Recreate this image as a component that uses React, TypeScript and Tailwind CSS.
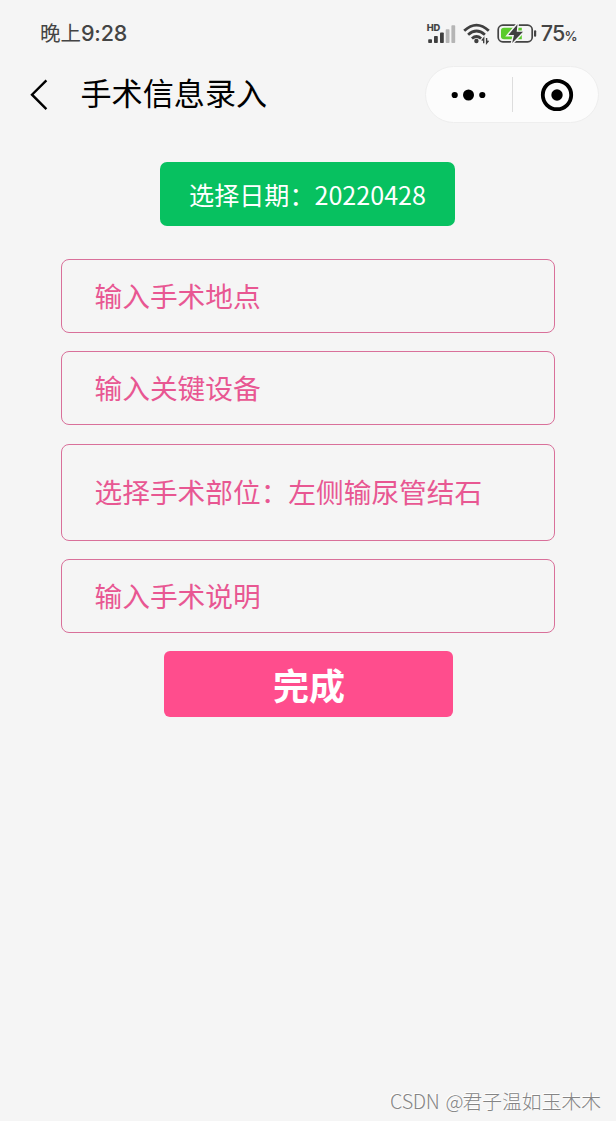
import type { ReactNode } from "react";

function SignalIcon() {
  return (
    <svg width="30" height="22" viewBox="0 0 30 22" className="shrink-0">
      <text x="0.8" y="8" fontSize="9.3" fontWeight="800" fontFamily="Inter, sans-serif" fill="#444" textLength="13.5">
        HD
      </text>
      <g fill="#3f3f3f">
        <rect x="2.2" y="16.2" width="3.8" height="3.8" rx="0.8" />
        <rect x="8" y="13" width="3.8" height="7" rx="0.8" />
        <rect x="14" y="9.4" width="3.8" height="10.6" rx="0.8" />
      </g>
      <g fill="#b5b5b5">
        <rect x="19.7" y="6.2" width="3.8" height="13.8" rx="0.8" />
        <rect x="25.4" y="2.2" width="3.8" height="17.8" rx="0.8" />
      </g>
    </svg>
  );
}

function WifiIcon() {
  return (
    <svg width="28" height="22" viewBox="0 0 28 22" className="shrink-0">
      <g fill="none" stroke="#3f3f3f" strokeWidth="2.8">
        <path d="M1.2 7.7Q13.5-3.5 25.8 7.7" />
        <path d="M5.1 11.7Q13.5 4.3 21.9 11.7" />
        <path d="M8.9 15.5Q13.5 11.5 18.1 15.5" />
      </g>
      <circle cx="13.4" cy="18" r="2.2" fill="#3f3f3f" />
      <path d="M20.7 20.3V15.3L18.8 17.6M23.6 15.1V20.1L25.5 17.8" fill="none" stroke="#3f3f3f" strokeWidth="1.4" />
    </svg>
  );
}

function BatteryIcon() {
  return (
    <svg width="40" height="22" viewBox="0 0 40 22" className="shrink-0">
      <rect x="1.2" y="2.2" width="34" height="16.6" rx="4.6" fill="#f5f5f5" stroke="#444" strokeWidth="1.7" />
      <path d="M7 4.8H24.8V16.2H7Q4 16.2 4 13.5V7.5Q4 4.8 7 4.8Z" fill="#5bcb2d" />
      <rect x="37" y="7.3" width="2.2" height="6.4" rx="1" fill="#444" />
      <path
        d="M20.5 1.2L11.3 12H17L15.2 20L26 8.8H19.7Z"
        fill="#3f3f3f"
        stroke="#f5f5f5"
        strokeWidth="2.8"
        paintOrder="stroke"
      />
    </svg>
  );
}

function StatusBar() {
  return (
    <div className="flex h-[66px] items-center justify-between pl-[40px] pr-[39px] text-[#444]">
      <div className="flex items-center pt-px leading-none">
        <span className="pb-[2px] text-[20.5px]">晚上</span>
        <span className="font-['Inter'] text-[21.5px] font-medium tracking-[-0.2px]">9:28</span>
      </div>
      <div className="flex items-center pt-px">
        <SignalIcon />
        <div className="w-[7px]" />
        <WifiIcon />
        <div className="w-[6px]" />
        <BatteryIcon />
        <span className="ml-[4px] flex items-baseline pt-px font-['Inter'] text-[21.5px] font-medium leading-none tracking-[-0.8px]">
          75<span className="text-[13px] font-semibold tracking-[-0.5px]">%</span>
        </span>
      </div>
    </div>
  );
}

function NavBar() {
  return (
    <div className="flex h-[57px] items-center pl-[29px] pr-[17px]">
      <svg width="20" height="32" viewBox="0 0 20 32" fill="none" stroke="#000" strokeWidth="2.4">
        <path d="M17.4 1.3L3 15.7L17.4 30.1" />
      </svg>
      <h1 className="ml-[31.5px] pb-[5px] text-[31.1px] leading-none text-black">手术信息录入</h1>
      <div className="ml-auto flex h-[57px] w-[174px] items-center rounded-full border border-[#eeeeee] bg-[#fcfcfc]">
        <svg width="86" height="34" viewBox="0 0 86 34">
          <circle cx="28.7" cy="17" r="3.1" />
          <circle cx="42.5" cy="17" r="5.5" />
          <circle cx="56.3" cy="17" r="3.1" />
        </svg>
        <div className="h-[35px] w-px bg-[#dddddd]" />
        <svg width="85" height="34" viewBox="0 0 85 34">
          <circle cx="44" cy="17" r="14.2" fill="none" stroke="#000" strokeWidth="3.8" />
          <circle cx="44" cy="17" r="5.7" />
        </svg>
      </div>
    </div>
  );
}

function Field({ children, tall = false }: { children: ReactNode; tall?: boolean }) {
  return (
    <div
      className={`flex w-[494px] items-center rounded-[8px] border border-[#d9709a] pl-[32.5px] text-[27.7px] leading-none text-[#e85792] ${
        tall ? "h-[97px]" : "h-[74px]"
      }`}
    >
      {children}
    </div>
  );
}

export default function App() {
  return (
    <div className="flex h-[1121px] w-[616px] flex-col bg-[#f5f5f5] font-['Noto_Sans_CJK_SC',sans-serif]">
      <StatusBar />
      <NavBar />
      <main className="flex flex-col items-center pt-[38.5px]">
        <button className="mr-px h-[64.5px] w-[295px] rounded-[7px] bg-[#07c160] pt-[2px] text-[25.1px] leading-none text-white">
          选择日期：20220428
        </button>
        <div className="mt-[33px] flex flex-col gap-[18.3px]">
          <Field>输入手术地点</Field>
          <Field>输入关键设备</Field>
          <Field tall>选择手术部位：左侧输尿管结石</Field>
          <Field>输入手术说明</Field>
        </div>
        <button className="mt-[18px] h-[66px] w-[289px] rounded-[6px] bg-[#ff4d8d] pl-[2px] text-[36px] font-bold leading-none text-white">
          完成
        </button>
      </main>
      <footer className="mt-auto flex h-[40px] items-center justify-end pr-[15px] text-[19.8px] font-light leading-none text-[#858585] [text-shadow:-1px_-1px_0_#ffffff]">
        <span className="mr-[6px] tracking-[-0.3px]">CSDN</span>
        <span className="tracking-[-1px]">@</span>
        <span>君子温如玉木木</span>
      </footer>
    </div>
  );
}
